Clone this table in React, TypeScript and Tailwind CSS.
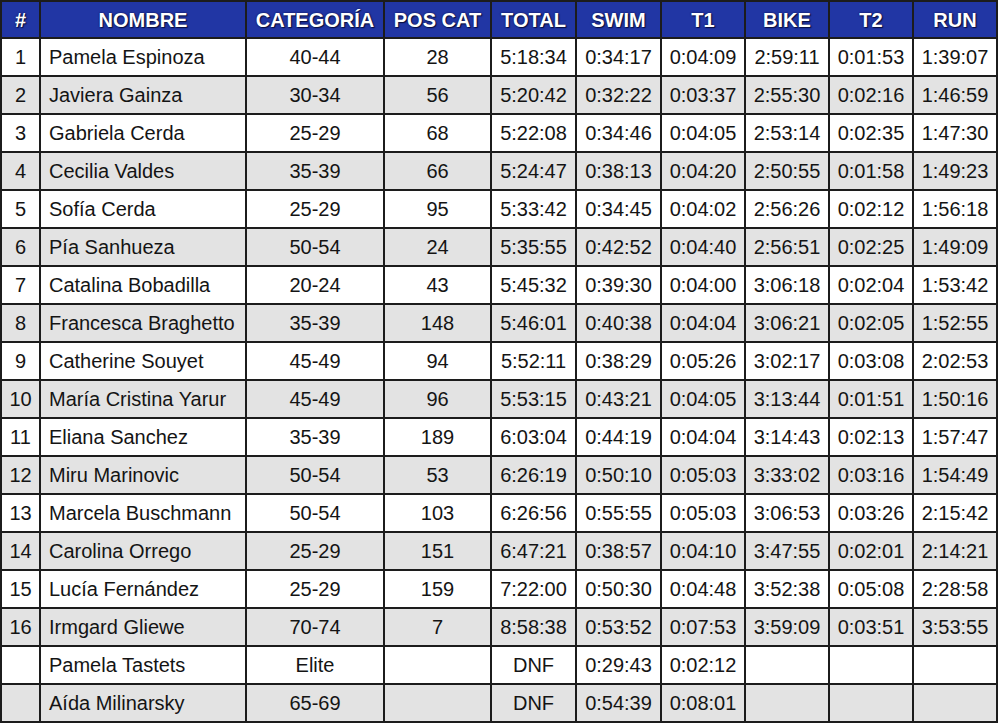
const HEADERS = ["#", "NOMBRE", "CATEGORÍA", "POS CAT", "TOTAL", "SWIM", "T1", "BIKE", "T2", "RUN"];

const WIDTHS = ["w-[39px]", "w-[206px]", "w-[138px]", "w-[107px]", "w-[85px]", "w-[85px]", "w-[84px]", "w-[84px]", "w-[84px]", "w-[84px]"];

type Row = [string, string, string, string, string, string, string, string, string, string];

const ROWS: Row[] = [
  ["1", "Pamela Espinoza", "40-44", "28", "5:18:34", "0:34:17", "0:04:09", "2:59:11", "0:01:53", "1:39:07"],
  ["2", "Javiera Gainza", "30-34", "56", "5:20:42", "0:32:22", "0:03:37", "2:55:30", "0:02:16", "1:46:59"],
  ["3", "Gabriela Cerda", "25-29", "68", "5:22:08", "0:34:46", "0:04:05", "2:53:14", "0:02:35", "1:47:30"],
  ["4", "Cecilia Valdes", "35-39", "66", "5:24:47", "0:38:13", "0:04:20", "2:50:55", "0:01:58", "1:49:23"],
  ["5", "Sofía Cerda", "25-29", "95", "5:33:42", "0:34:45", "0:04:02", "2:56:26", "0:02:12", "1:56:18"],
  ["6", "Pía Sanhueza", "50-54", "24", "5:35:55", "0:42:52", "0:04:40", "2:56:51", "0:02:25", "1:49:09"],
  ["7", "Catalina Bobadilla", "20-24", "43", "5:45:32", "0:39:30", "0:04:00", "3:06:18", "0:02:04", "1:53:42"],
  ["8", "Francesca Braghetto", "35-39", "148", "5:46:01", "0:40:38", "0:04:04", "3:06:21", "0:02:05", "1:52:55"],
  ["9", "Catherine Souyet", "45-49", "94", "5:52:11", "0:38:29", "0:05:26", "3:02:17", "0:03:08", "2:02:53"],
  ["10", "María Cristina Yarur", "45-49", "96", "5:53:15", "0:43:21", "0:04:05", "3:13:44", "0:01:51", "1:50:16"],
  ["11", "Eliana Sanchez", "35-39", "189", "6:03:04", "0:44:19", "0:04:04", "3:14:43", "0:02:13", "1:57:47"],
  ["12", "Miru Marinovic", "50-54", "53", "6:26:19", "0:50:10", "0:05:03", "3:33:02", "0:03:16", "1:54:49"],
  ["13", "Marcela Buschmann", "50-54", "103", "6:26:56", "0:55:55", "0:05:03", "3:06:53", "0:03:26", "2:15:42"],
  ["14", "Carolina Orrego", "25-29", "151", "6:47:21", "0:38:57", "0:04:10", "3:47:55", "0:02:01", "2:14:21"],
  ["15", "Lucía Fernández", "25-29", "159", "7:22:00", "0:50:30", "0:04:48", "3:52:38", "0:05:08", "2:28:58"],
  ["16", "Irmgard Gliewe", "70-74", "7", "8:58:38", "0:53:52", "0:07:53", "3:59:09", "0:03:51", "3:53:55"],
  ["", "Pamela Tastets", "Elite", "", "DNF", "0:29:43", "0:02:12", "", "", ""],
  ["", "Aída Milinarsky", "65-69", "", "DNF", "0:54:39", "0:08:01", "", "", ""],
];

export default function App() {
  return (
    <div className="h-[725px] w-[1000px] bg-white font-['Liberation_Sans',Arial,sans-serif]">
      <table className="w-[997px] table-fixed border-collapse border-2 border-[#1c1c1c]">
        <colgroup>
          {WIDTHS.map((w, i) => (
            <col key={i} className={w} />
          ))}
        </colgroup>
        <thead>
          <tr className="h-[37px] bg-[#2136a4]">
            {HEADERS.map((h) => (
              <th
                key={h}
                className="border-2 border-[#1c1c1c] p-0 text-center text-[20px] font-bold text-white [text-shadow:0_0_2px_#0a0f40,1px_1px_1px_#0a0f40]"
              >
                {h}
              </th>
            ))}
          </tr>
        </thead>
        <tbody>
          {ROWS.map((row, r) => (
            <tr key={r} className={`h-[38px] ${r % 2 === 1 ? "bg-[#e3e3e3]" : "bg-white"}`}>
              {row.map((cell, c) => (
                <td
                  key={c}
                  className={`border-2 border-[#1c1c1c] p-0 text-[20px] text-[#141414] ${
                    c === 1 ? "pl-[8px] text-left" : "text-center"
                  }`}
                >
                  {cell}
                </td>
              ))}
            </tr>
          ))}
        </tbody>
      </table>
    </div>
  );
}
